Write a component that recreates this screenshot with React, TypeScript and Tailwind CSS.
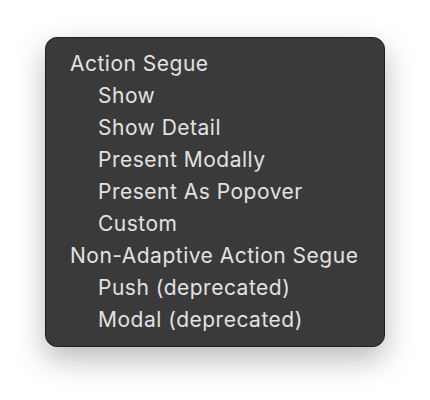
const rows: { label: string; indent?: boolean }[] = [
  { label: "Action Segue" },
  { label: "Show", indent: true },
  { label: "Show Detail", indent: true },
  { label: "Present Modally", indent: true },
  { label: "Present As Popover", indent: true },
  { label: "Custom", indent: true },
  { label: "Non-Adaptive Action Segue" },
  { label: "Push (deprecated)", indent: true },
  { label: "Modal (deprecated)", indent: true },
];

export default function App() {
  return (
    <div className="h-[400px] w-[430px] bg-white pl-[45px] pt-[37px]">
      <div className="w-[340px] rounded-[12px] border border-[#1f1f1f] bg-[#3a3a3a] py-[10px] shadow-[0_12px_30px_rgba(0,0,0,0.28)]">
        {rows.map((row) => (
          <div
            key={row.label}
            className={`flex h-8 items-center font-['Inter',sans-serif] text-[21px] tracking-[0.5px] text-[#e2e2e2] ${
              row.indent ? "pl-[52px]" : "pl-[24px]"
            }`}
          >
            {row.label}
          </div>
        ))}
      </div>
    </div>
  );
}
